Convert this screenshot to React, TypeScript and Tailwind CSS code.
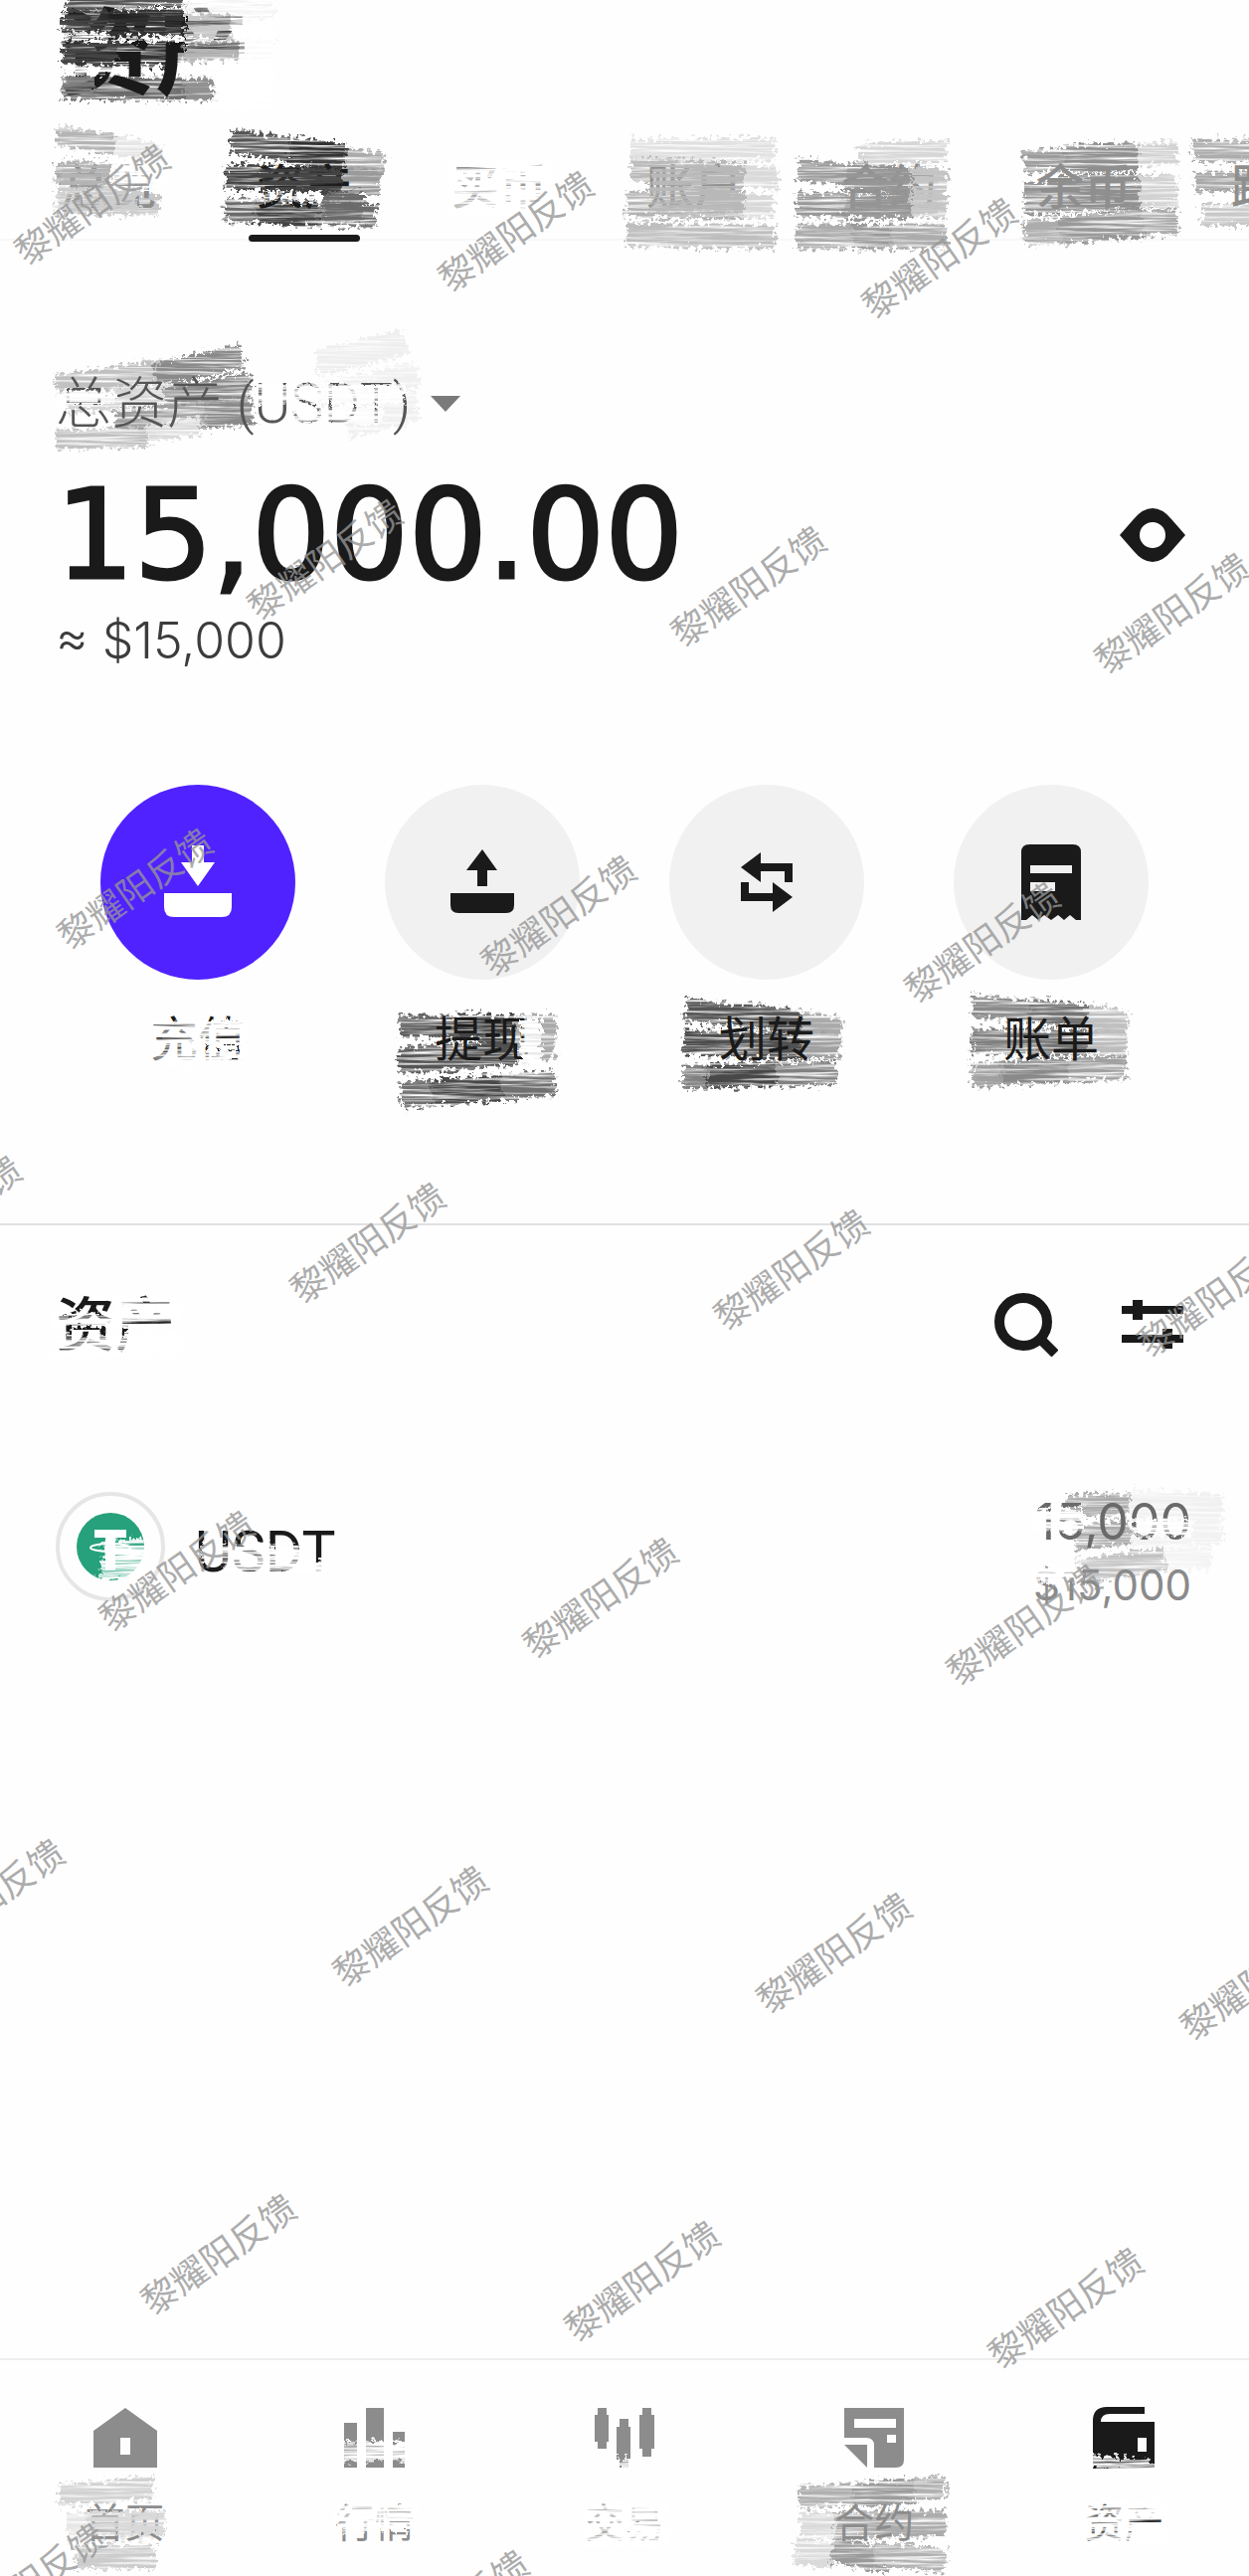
import type { ReactNode } from "react";
import clsx from "clsx";

// [x1, y1, x2, y2, 太さ, 色]
type Stroke = [number, number, number, number, number, string];

const W = "#ffffff";

// タブ（strokes はテキスト中央からの相対座標）
const tabs: { label: string; active?: boolean; strokes: Stroke[]; erase: Stroke[] }[] = [
  {
    label: "总览",
    strokes: [
      [-53, -52, 6, -42, 20, "#b4b4b4"],
      [6, -42, 52, -32, 20, "#e6e6e6"],
      [-54, -14, 2, -12, 22, "#a8a8a8"],
      [2, -12, 44, -8, 22, "#e2e2e2"],
      [-54, 16, 50, 18, 22, "#c6c6c6"],
    ],
    erase: [
      [-50, -14, 60, -14, 30, W],
      [-50, -14, 2, -12, 26, "#b4b4b4"],
      [2, -12, 60, -12, 30, W],
      [-50, 12, 30, 14, 24, "#cccccc"],
    ],
  },
  {
    label: "资产",
    active: true,
    strokes: [
      [-74, -47, 42, -27, 24, "#555555"],
      [-16, -38, 40, -30, 26, "#333333"],
      [42, -28, 80, -20, 26, "#aaaaaa"],
      [-79, -11, 38, -7, 25, "#444444"],
      [-40, -9, 36, -6, 25, "#222222"],
      [38, -7, 76, -4, 24, "#9a9a9a"],
      [-80, 23, 72, 29, 24, "#6a6a6a"],
      [-50, 24, 14, 28, 24, "#444444"],
    ],
    erase: [
      [-46, -9, 38, -6, 24, "#444444"],
      [-46, 9, 50, 11, 10, W],
      [20, 20, 60, 20, 30, "#6a6a6a"],
    ],
  },
  {
    label: "买币",
    strokes: [],
    erase: [
      [-50, 0, 52, 0, 54, W],
      [-50, 0, 52, 0, 54, W],
      [-50, 2, 52, 2, 54, W],
    ],
  },
  {
    label: "账户",
    strokes: [
      [-64, -37, 82, -38, 22, "#e0e0e0"],
      [-64, -18, 50, -12, 24, "#bababa"],
      [-20, -14, 50, -10, 26, "#b8b8b8"],
      [50, -12, 84, -8, 24, "#dadada"],
      [-68, 17, 50, 20, 26, "#b2b2b2"],
      [50, 18, 80, 20, 24, "#d8d8d8"],
      [-68, 48, 82, 50, 24, "#bebebe"],
    ],
    erase: [
      [-44, 0, 50, 0, 50, "#b8b8b8"],
      [-44, 0, 50, 0, 50, "#b8b8b8"],
    ],
  },
  {
    label: "合约",
    strokes: [
      [-30, -33, 58, -36, 22, "#d6d6d6"],
      [-92, -18, 22, -4, 22, "#9c9c9c"],
      [-36, -12, 20, -6, 26, "#909090"],
      [22, -10, 58, -4, 26, "#c4c4c4"],
      [-93, 18, 22, 19, 24, "#989898"],
      [-50, 18, 22, 19, 26, "#8c8c8c"],
      [22, 18, 58, 20, 24, "#c4c4c4"],
      [-93, 50, 58, 49, 25, "#acacac"],
      [-36, 50, 2, 50, 25, "#999999"],
    ],
    erase: [
      [-44, -9, 24, -6, 24, "#969696"],
      [-44, 18, 24, 19, 24, "#969696"],
      [22, 4, 50, 4, 46, "#c4c4c4"],
    ],
  },
  {
    label: "余币",
    strokes: [
      [-60, -25, 55, -33, 22, "#9c9c9c"],
      [-20, -28, 54, -30, 28, "#909090"],
      [55, -32, 94, -34, 22, "#d2d2d2"],
      [-60, 12, 56, 5, 32, "#949494"],
      [-24, 6, 56, 5, 36, "#909090"],
      [56, 4, 94, 4, 32, "#d2d2d2"],
      [-60, 46, 94, 34, 26, "#acacac"],
      [-24, 44, 60, 36, 28, "#999999"],
    ],
    erase: [],
  },
  {
    label: "跟单",
    strokes: [
      [-86, -36, 80, -38, 22, "#acacac"],
      [-85, -5, 80, -7, 20, "#a8a8a8"],
      [-78, 28, 80, 28, 22, "#c8c8c8"],
    ],
    erase: [],
  },
];

const actions: { label: string; primary?: boolean; icon: ReactNode; strokes: Stroke[]; erase: Stroke[] }[] = [
  {
    label: "充值",
    primary: true,
    icon: <DepositIcon />,
    strokes: [],
    erase: [
      [-50, -6, 50, -6, 26, W],
      [-50, 14, 0, 14, 26, W],
      [0, 16, 50, 16, 12, W],
    ],
  },
  {
    label: "提现",
    icon: <WithdrawIcon />,
    strokes: [
      [-83, -14, 32, -10, 22, "#606060"],
      [-24, -14, 32, -10, 26, "#444444"],
      [32, -12, 74, -12, 26, "#aaaaaa"],
      [-84, 22, 34, 12, 26, "#555555"],
      [-30, 18, 34, 12, 26, "#505050"],
      [34, 12, 72, 6, 26, "#aaaaaa"],
      [-82, 56, 73, 44, 26, "#707070"],
      [-50, 54, 20, 48, 26, "#484848"],
    ],
    erase: [
      [38, 4, 60, 4, 50, W],
    ],
  },
  {
    label: "划转",
    icon: <TransferIcon />,
    strokes: [
      [-82, -30, 34, -16, 22, "#555555"],
      [-24, -26, 34, -16, 24, "#555555"],
      [34, -17, 74, -10, 24, "#aaaaaa"],
      [-84, 3, 34, 8, 25, "#4c4c4c"],
      [-50, 4, 34, 8, 25, "#505050"],
      [34, 6, 74, 8, 24, "#a0a0a0"],
      [-84, 38, 70, 34, 24, "#808080"],
      [-60, 38, 10, 34, 24, "#484848"],
    ],
    erase: [],
  },
  {
    label: "账单",
    icon: <BillIcon />,
    strokes: [
      [-80, -34, 36, -22, 22, "#8a8a8a"],
      [-22, -30, 36, -22, 24, "#747474"],
      [36, -24, 76, -16, 24, "#c0c0c0"],
      [-80, 2, 36, 4, 25, "#808080"],
      [-40, 2, 36, 4, 25, "#747474"],
      [36, 2, 76, 4, 24, "#bcbcbc"],
      [-80, 36, 75, 28, 24, "#a0a0a0"],
      [-50, 34, 16, 30, 24, "#8a8a8a"],
    ],
    erase: [],
  },
];

const navItems: { label: string; active?: boolean; icon: ReactNode; strokes: Stroke[]; erase: Stroke[]; iconErase: Stroke[] }[] = [
  {
    label: "首页",
    icon: <HomeIcon />,
    iconErase: [],
    strokes: [
      [-66, -28, 28, -36, 22, "#d2d2d2"],
      [-58, 4, 34, 2, 28, "#e6e6e6"],
      [-50, 34, 30, 34, 24, "#cccccc"],
    ],
    erase: [[-40, 0, 40, 0, 24, "#d8d8d8"]],
  },
  {
    label: "行情",
    icon: <MarketIcon />,
    iconErase: [[-34, 14, 34, 12, 20, W]],
    strokes: [],
    erase: [[-42, -6, 44, -6, 28, W]],
  },
  {
    label: "交易",
    icon: <TradeIcon />,
    iconErase: [[-10, 26, 10, 26, 10, W]],
    strokes: [],
    erase: [
      [-42, 2, 44, 2, 44, W],
      [0, 2, 44, 2, 40, W],
    ],
  },
  {
    label: "合约",
    icon: <ContractIcon />,
    iconErase: [],
    strokes: [
      [-76, -26, 72, -36, 22, "#b0b0b0"],
      [-22, -28, 40, -32, 24, "#9c9c9c"],
      [-74, 2, -40, 2, 26, "#dadada"],
      [-40, 2, 72, 0, 26, "#acacac"],
      [-80, 28, -42, 32, 26, "#dadada"],
      [-42, 26, 14, 38, 26, "#9a9a9a"],
      [0, 30, 72, 38, 24, "#b0b0b0"],
    ],
    erase: [],
  },
  {
    label: "资产",
    active: true,
    icon: <WalletIcon />,
    iconErase: [[-34, 24, 34, 30, 14, W]],
    strokes: [],
    erase: [
      [-42, 0, 44, 0, 46, W],
      [-42, 14, 44, 14, 18, W],
    ],
  },
];

// 透かしの各行の先頭座標
const watermarkRows = [
  [93, 206],
  [327, 563],
  [136, 894],
  [-56, 1223],
  [178, 1580],
  [-13, 1910],
  [220, 2267],
  [28, 2598],
];

function Smudge({ strokes, className }: { strokes: Stroke[]; className?: string }) {
  if (strokes.length === 0) return null;
  return (
    <svg className={clsx("pointer-events-none absolute size-px overflow-visible", className)} aria-hidden="true">
      <g filter="url(#bristle)">
        {strokes.map(([x1, y1, x2, y2, width, color], i) => (
          <path key={i} d={`M${x1} ${y1}L${x2} ${y2}`} stroke={color} strokeWidth={width} />
        ))}
      </g>
    </svg>
  );
}

function BrushFilter() {
  return (
    <svg className="absolute size-0" aria-hidden="true">
      <filter
        id="bristle"
        filterUnits="userSpaceOnUse"
        x="-200"
        y="-120"
        width="640"
        height="280"
        colorInterpolationFilters="sRGB"
      >
        <feTurbulence type="fractalNoise" baseFrequency="0.012 0.38" numOctaves="4" seed="7" result="streak" />
        <feColorMatrix in="streak" values="0 0 0 0 0  0 0 0 0 0  0 0 0 0 0  2.6 0 0 0 -0.48" result="mask" />
        <feTurbulence type="fractalNoise" baseFrequency="0.22" numOctaves="3" seed="3" result="rough" />
        <feDisplacementMap in="SourceGraphic" in2="rough" scale="16" xChannelSelector="R" yChannelSelector="G" result="edge" />
        <feComposite in="edge" in2="mask" operator="in" />
      </filter>
    </svg>
  );
}

function DepositIcon() {
  return (
    <svg viewBox="0 0 68 74" className="h-[74px] w-[68px]" fill="currentColor">
      <path d="M28 0h12v17h11L34 41 17 17h11z" />
      <path d="M0 48h68v14q0 10-10 10H10Q0 72 0 62z" />
    </svg>
  );
}

function WithdrawIcon() {
  return (
    <svg viewBox="0 0 68 74" className="h-[74px] w-[68px]" fill="currentColor">
      <path d="M34 4l15 21H39v16H29V25H18z" />
      <path d="M2 48h64v12q0 8-8 8H10q-8 0-8-8z" />
    </svg>
  );
}

function TransferIcon() {
  return (
    <svg viewBox="0 0 54 60" className="h-[60px] w-[54px]" fill="currentColor">
      <path d="M1 15L21 0v11h32v19h-8V19H21v11z" />
      <path d="M1 30h8v11h24V30l20 15-20 15V49H1z" />
    </svg>
  );
}

function BillIcon() {
  return (
    <svg viewBox="0 0 60 76" className="h-[76px] w-[60px]" fill="currentColor">
      <path
        fillRule="evenodd"
        d="M0 8Q0 0 8 0h44q8 0 8 8v68h-5l-6-5-6 5-6-5-7 5-7-5-6 5-6-5-6 5H0zM9 21h42v8H9zM9 38h25v9H9z"
      />
    </svg>
  );
}

function HomeIcon() {
  return (
    <svg viewBox="0 0 64 60" className="h-[60px] w-16" fill="currentColor">
      <path fillRule="evenodd" d="M32 0l32 23v37H0V23zM27 30h10v17H27z" />
    </svg>
  );
}

function MarketIcon() {
  return (
    <svg viewBox="0 0 62 60" className="h-[60px] w-[62px]" fill="currentColor">
      <path d="M0 15h13v45H0zM22 0h18v60H22zM49 24h12v36H49z" />
    </svg>
  );
}

function TradeIcon() {
  return (
    <svg viewBox="0 0 62 60" className="h-[60px] w-[62px]" fill="currentColor">
      <path d="M4 0h9v7h2v27h-2v7H4v-7H1V7h3z" />
      <path d="M26 11h9v8h2v33h-2v8h-9v-8h-3V19h3z" />
      <path d="M49 0h9v7h3v34h-3v8h-9v-8h-3V7h3z" />
    </svg>
  );
}

function ContractIcon() {
  return (
    <svg viewBox="0 0 60 60" className="size-[60px]" fill="currentColor">
      <path fillRule="evenodd" d="M0 0h60v52q0 8-8 8H30V38q0-8-8-8H0zM10 11h42v9H10zM43 27h9v8h-9z" />
      <path d="M0 37h23v23z" />
    </svg>
  );
}

function WalletIcon() {
  return (
    <svg viewBox="0 0 62 62" className="h-[62px] w-[62px]" fill="currentColor">
      <path fillRule="evenodd" d="M14 0h38v7H17Q8 7 8 15h54v47H0V14Q0 0 14 0zM45 31h9v14h-9z" />
    </svg>
  );
}

export default function App() {
  return (
    <main className="relative flex min-h-screen flex-col overflow-hidden bg-[#fefefe] font-['Inter','Noto_Sans_CJK_SC',sans-serif] text-[#1a1a1a]">
      <BrushFilter />

      {/* ヘッダー */}
      <header className="relative flex h-[120px] items-start overflow-hidden px-[60px]">
        <Smudge
          className="top-0 left-0"
          strokes={[
            [67, 4, 200, -2, 14, "#555555"],
            [185, 12, 276, 6, 24, "#d0d0d0"],
            [67, 24, 165, 22, 26, "#333333"],
            [67, 24, 165, 22, 26, "#333333"],
            [165, 24, 232, 28, 26, "#b4b4b4"],
            [65, 54, 175, 54, 26, "#333333"],
            [65, 54, 175, 54, 26, "#333333"],
            [175, 52, 242, 48, 20, "#a0a0a0"],
            [242, 48, 276, 50, 20, "#eeeeee"],
            [66, 88, 216, 90, 24, "#707070"],
            [66, 90, 150, 90, 22, "#6a6a6a"],
          ]}
        />
        <h1 className="relative text-[96px] leading-[104px] font-bold">资产</h1>
        <Smudge
          className="top-0 left-0"
          strokes={[
            [186, 50, 276, 50, 120, W],
            [186, 50, 276, 50, 120, W],
            [186, 50, 276, 50, 120, W],
            [62, 24, 110, 24, 26, "#444444"],
            [62, 38, 184, 36, 10, W],
            [62, 54, 118, 54, 26, "#333333"],
            [62, 54, 118, 54, 26, "#444444"],
            [62, 70, 128, 70, 10, W],
            [62, 88, 96, 88, 24, "#808080"],
            [110, 24, 184, 22, 26, "#333333"],
            [186, 25, 232, 28, 24, "#c8c8c8"],
            [186, 54, 240, 50, 18, "#b4b4b4"],
            [186, 90, 214, 90, 22, "#909090"],
          ]}
        />
      </header>

      <nav className="flex h-[122px] items-center gap-[100px] border-b-2 border-[#f8f8f8] pt-4 pl-[62px] text-5xl font-medium whitespace-nowrap">
        {tabs.map((tab) => (
          <a
            key={tab.label}
            href="#"
            className={clsx("relative shrink-0", tab.active ? "text-[#1a1a1a]" : "text-[#8e8e8e]")}
          >
            <Smudge strokes={tab.strokes} className="top-1/2 left-1/2" />
            <span className="relative">{tab.label}</span>
            <Smudge strokes={tab.erase} className="top-1/2 left-1/2" />
            {tab.active && (
              <span className="absolute top-[72px] left-1/2 h-[7px] w-28 -translate-x-1/2 rounded-full bg-[#1a1a1a]" />
            )}
          </a>
        ))}
      </nav>

      {/* 総資産 */}
      <section className="px-14 pt-[124px]">
        <div className="relative flex h-20 items-center">
          <Smudge
            className="top-1/2 left-0"
            strokes={[
              [0, -18, 110, -34, 22, "#c0c0c0"],
              [100, -28, 188, -48, 24, "#8a8a8a"],
              [10, 0, 130, -12, 20, "#d6d6d6"],
              [110, -4, 196, -20, 24, "#8a8a8a"],
              [60, 20, 198, 6, 26, "#a0a0a0"],
              [150, 12, 198, 8, 26, "#8a8a8a"],
              [0, 36, 92, 34, 20, "#c0c0c0"],
              [92, 30, 146, 22, 18, "#dadada"],
              [262, -40, 352, -62, 26, "#eeeeee"],
              [264, -6, 364, -30, 26, "#f0f0f0"],
              [292, 20, 364, 2, 30, "#f0f0f0"],
            ]}
          />
          <button className="relative flex items-center gap-5 font-['Roboto','Noto_Sans_CJK_SC',sans-serif] text-[56px] leading-[80px] font-light text-[#555555]">
            <span>总资产 (USDT)</span>
            <svg viewBox="0 0 30 16" className="h-4 w-[30px]" fill="#7a7a7a">
              <path d="M0 0h30L15 16z" />
            </svg>
          </button>
          <Smudge
            className="top-1/2 left-0"
            strokes={[
              [196, -10, 350, -10, 20, W],
              [240, 12, 330, 12, 18, W],
              [0, -6, 60, -6, 14, W],
            ]}
          />
        </div>
        <div className="mt-8 flex h-[120px] items-center justify-between pr-2">
          <p className="font-['DejaVu_Sans',sans-serif] text-[124px] leading-[120px] [-webkit-text-stroke:3px_#1a1a1a]">
            15,000.00
          </p>
          <button aria-label="隐藏资产">
            <svg viewBox="0 0 66 54" className="h-[54px] w-[66px]" fill="currentColor">
              <path
                fillRule="evenodd"
                d="M0 27L14 11Q23 0 33 0t19 11l14 16-14 16Q43 54 33 54T14 43zM33 14a13 13 0 100 26 13 13 0 000-26z"
              />
            </svg>
          </button>
        </div>
        <p className="mt-4 text-[50px] leading-[60px] font-light text-[#3c3c3c]">≈ $15,000</p>
      </section>

      {/* 操作ボタン */}
      <section className="mt-[115px] grid grid-cols-4 px-14">
        {actions.map((action) => (
          <button key={action.label} className="flex flex-col items-center">
            <span
              className={clsx(
                "flex size-[196px] items-center justify-center rounded-full",
                action.primary ? "bg-[#5022ff] text-white" : "bg-[#f1f1f1]"
              )}
            >
              {action.icon}
            </span>
            <span className="relative mt-7 text-5xl leading-[64px]">
              <Smudge strokes={action.strokes} className="top-1/2 left-1/2" />
              <span className="relative">{action.label}</span>
              <Smudge strokes={action.erase} className="top-1/2 left-1/2" />
            </span>
          </button>
        ))}
      </section>

      {/* 資産一覧 */}
      <section className="mt-[153px] border-t-2 border-[#e0e0e0] px-14 pt-10">
        <div className="flex h-[120px] items-center justify-between">
          <h2 className="relative text-6xl font-medium">
            资产
            <Smudge
              className="top-1/2 left-1/2"
              strokes={[
                [-66, -4, 66, -6, 14, W],
                [-66, 22, 66, 20, 24, W],
                [0, -18, 66, -18, 20, W],
              ]}
            />
          </h2>
          <div className="flex items-center gap-16 pr-2.5">
            <button aria-label="搜索">
              <svg viewBox="0 0 64 64" className="size-16" fill="none" stroke="currentColor" strokeWidth="10">
                <circle cx="29" cy="29" r="24" />
                <path d="M45 45l16 16" />
              </svg>
            </button>
            <button aria-label="筛选">
              <svg viewBox="0 0 62 50" className="h-[50px] w-[62px]" fill="currentColor">
                <path d="M0 6h11V0h10v6h41v8H21v6H11v-6H0z" />
                <path d="M0 35h41v-6h10v6h11v8H51v6H41v-6H0z" />
              </svg>
            </button>
          </div>
        </div>

        <div className="mt-[106px] flex items-start justify-between">
          <div className="flex h-[114px] items-center gap-[30px]">
            <span className="relative flex size-[110px] items-center justify-center rounded-full border-4 border-[#e6e6e6]">
              <svg viewBox="0 0 68 68" className="size-[68px]" aria-hidden="true">
                <circle cx="34" cy="34" r="34" fill="#26a17b" />
                <path d="M18 17h32v8H39v33H29V25H18z" fill="#ffffff" />
                <ellipse cx="34" cy="35" rx="20" ry="4" fill="none" stroke="#ffffff" strokeWidth="2" />
              </svg>
              <Smudge
                className="top-1/2 left-1/2"
                strokes={[
                  [-8, 4, 38, 0, 18, W],
                  [-10, 26, 36, 20, 20, W],
                  [0, 14, 38, 12, 14, W],
                ]}
              />
            </span>
            <span className="relative pt-3 font-['Roboto',sans-serif] text-[57px] leading-[64px]">
              USDT
              <Smudge
                className="top-1/2 left-1/2"
                strokes={[
                  [-66, 6, 40, 8, 20, W],
                  [-40, 20, 60, 20, 14, W],
                ]}
              />
            </span>
          </div>
          <div className="relative pr-0.5 text-right">
            <Smudge
              className="top-16 right-0"
              strokes={[
                [-126, -48, -62, -50, 22, "#acacac"],
                [-118, -16, -62, -22, 24, "#acacac"],
                [-62, -50, 30, -46, 28, "#f0f0f0"],
                [-62, -22, 30, -24, 30, "#f2f2f2"],
                [-116, 18, -28, 6, 24, "#c2c2c2"],
                [-28, 6, 20, 4, 22, "#f4f4f4"],
              ]}
            />
            <p className="relative text-[50px] leading-[64px] text-[#6a6a6a]">15,000</p>
            <p className="relative text-[42px] leading-[64px] text-[#8a8a8a]">$15,000</p>
            <Smudge
              className="top-16 right-0"
              strokes={[
                [-160, -34, -110, -34, 24, W],
                [-164, 22, -110, 18, 20, W],
                [-164, 22, -130, 20, 20, W],
                [-60, -26, 0, -26, 18, W],
              ]}
            />
          </div>
        </div>
      </section>

      {/* 下部ナビ */}
      <nav className="mt-auto grid grid-cols-5 border-t-2 border-[#eeeeee] pt-12 pb-[25px]">
        {navItems.map((item) => (
          <a
            key={item.label}
            href="#"
            className={clsx("flex flex-col items-center", item.active ? "text-[#1a1a1a]" : "text-[#8c8c8c]")}
          >
            <span className="relative flex h-[60px] items-center">
              {item.icon}
              <Smudge strokes={item.iconErase} className="top-1/2 left-1/2" />
            </span>
            <span className="relative mt-7 text-[40px] leading-[56px]">
              <Smudge strokes={item.strokes} className="top-1/2 left-1/2" />
              <span className="relative">{item.label}</span>
              <Smudge strokes={item.erase} className="top-1/2 left-1/2" />
            </span>
          </a>
        ))}
      </nav>

      {/* 透かし */}
      <div className="pointer-events-none absolute inset-0">
        {watermarkRows.map(([x, y]) =>
          [0, 1, 2, 3].map((col) => (
            <span
              key={`${y}-${col}`}
              className="absolute -translate-x-1/2 -translate-y-1/2 -rotate-35 text-[36px] leading-10 whitespace-nowrap text-[#969696]/80"
              style={{ left: x + col * 426, top: y + col * 27 }}
            >
              黎耀阳反馈
            </span>
          ))
        )}
      </div>
    </main>
  );
}
